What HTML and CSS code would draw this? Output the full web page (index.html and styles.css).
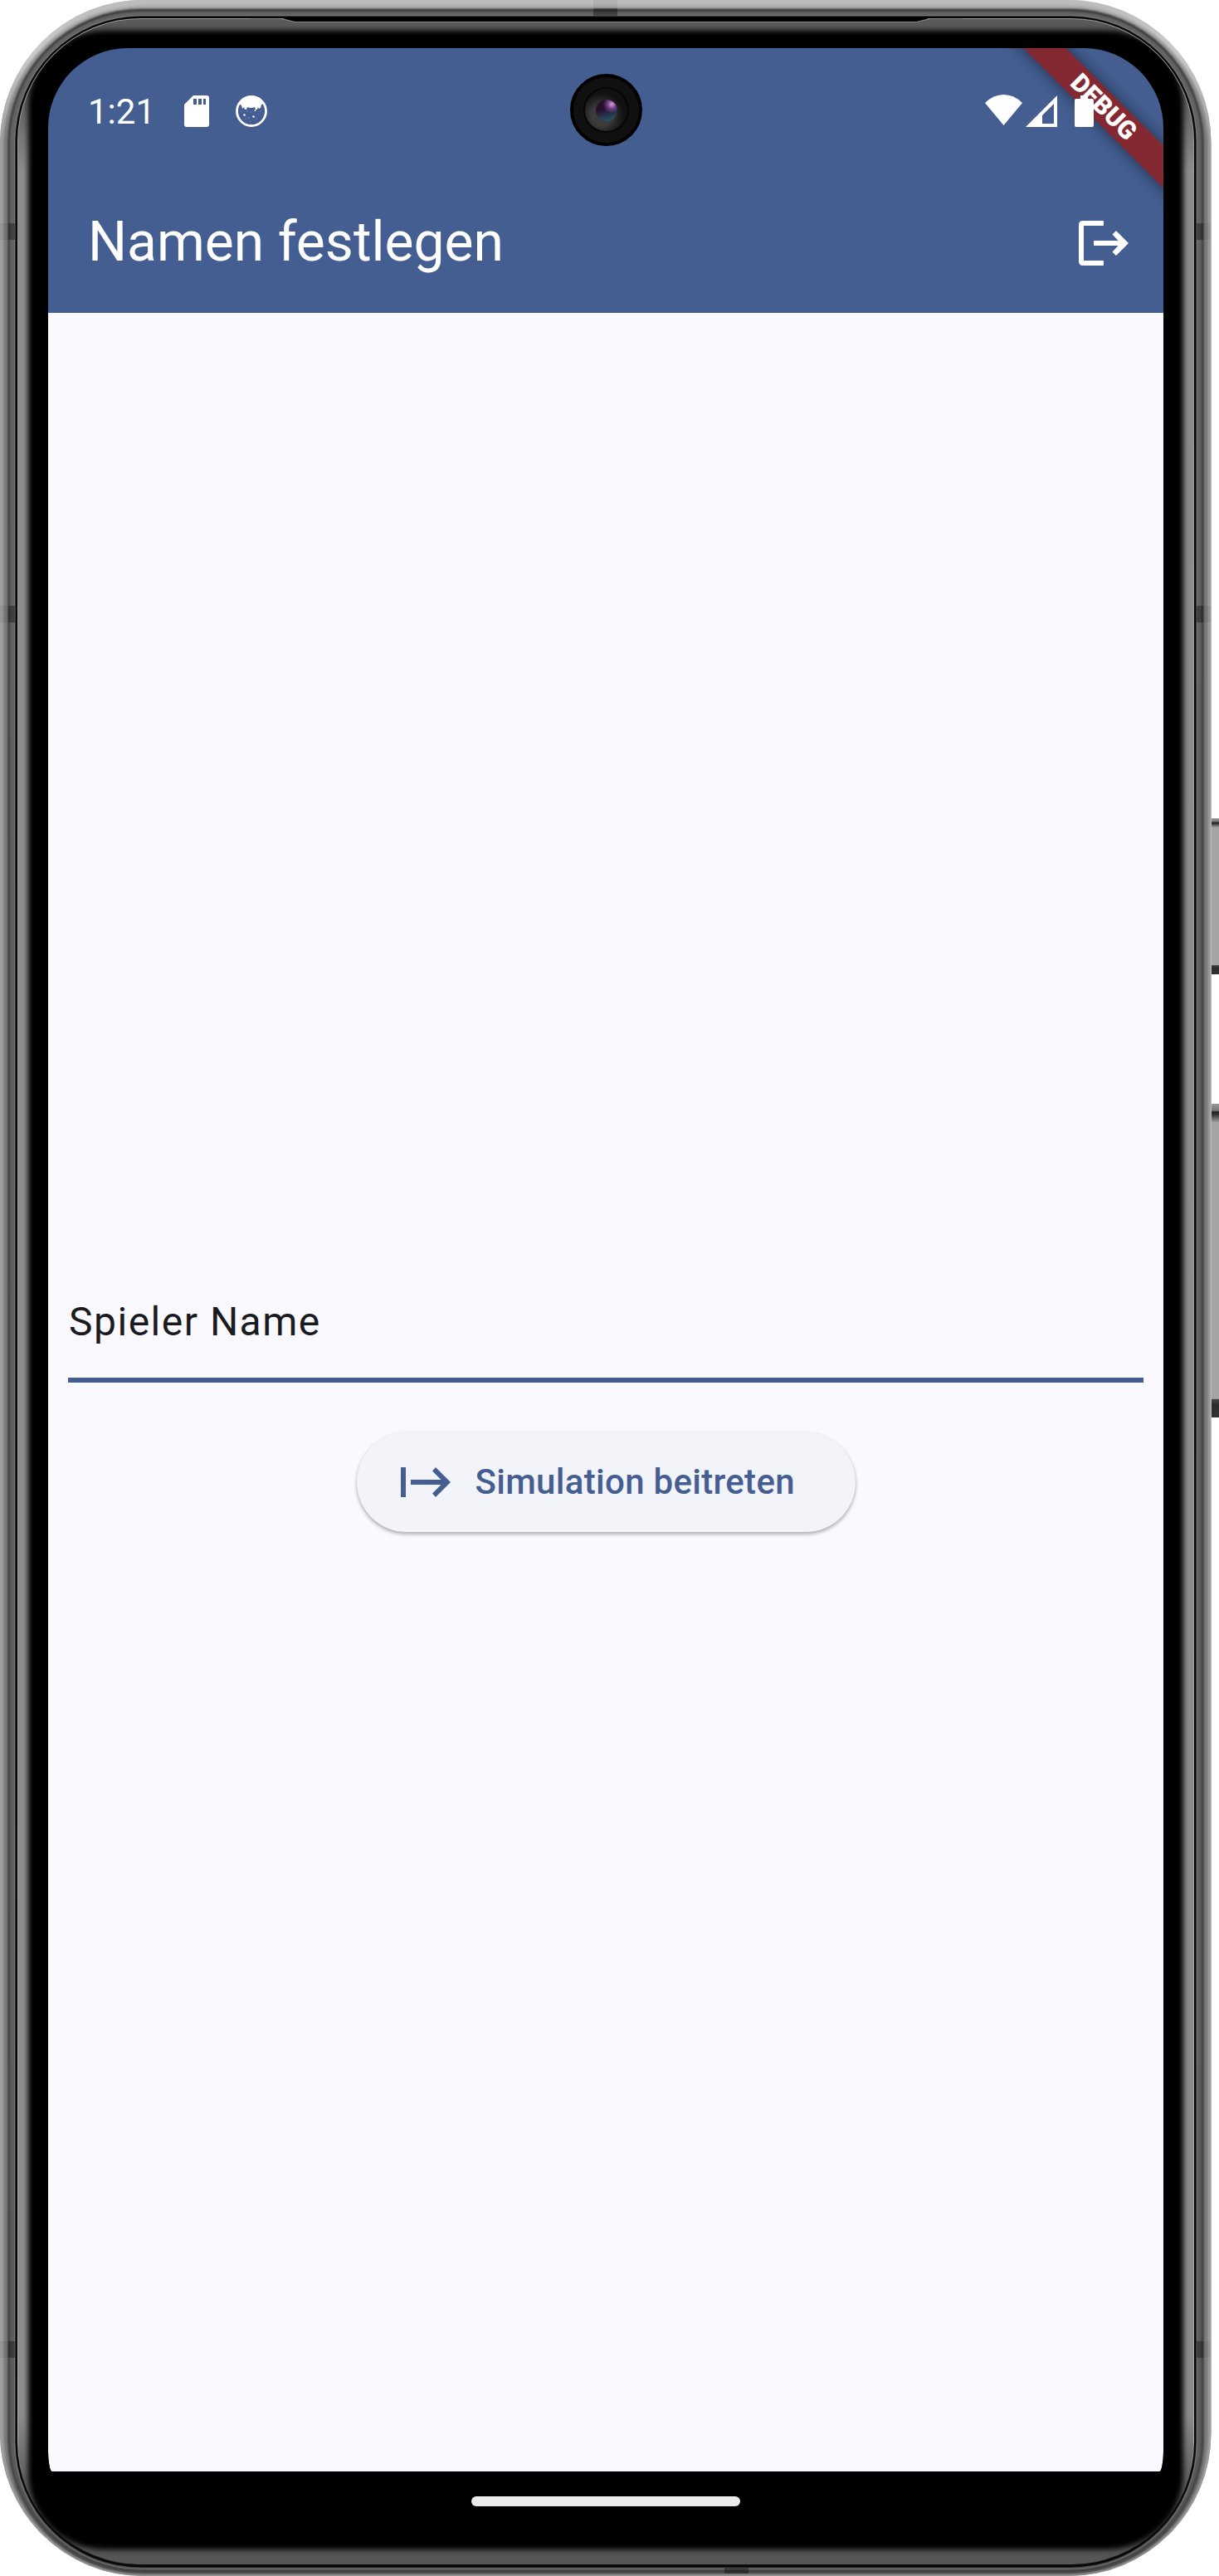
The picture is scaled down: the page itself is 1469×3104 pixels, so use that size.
FILE: index.html
```html
<!DOCTYPE html>
<html lang="de">
<head>
<meta charset="utf-8">
<title>Namen festlegen</title>
<link rel="stylesheet" href="styles.css">
</head>
<body>
<div class="device">
  <svg class="frame" viewBox="0 0 1469 3104" width="1469" height="3104" aria-hidden="true">
    <defs>
      <linearGradient id="edge" gradientUnits="userSpaceOnUse" x1="0" y1="0" x2="0" y2="3104">
        <stop offset="0" stop-color="#bcbcbc"/><stop offset=".02" stop-color="#cacaca"/><stop offset=".055" stop-color="#a0a0a0"/><stop offset=".95" stop-color="#a0a0a0"/><stop offset="1" stop-color="#959595"/>
      </linearGradient>
      <linearGradient id="edge2" gradientUnits="userSpaceOnUse" x1="0" y1="0" x2="0" y2="3104">
        <stop offset="0" stop-color="#b0b0b0"/><stop offset=".02" stop-color="#9c9c9c"/><stop offset=".055" stop-color="#7c7c7c"/><stop offset=".95" stop-color="#7c7c7c"/><stop offset="1" stop-color="#555"/>
      </linearGradient>
      <linearGradient id="rail" gradientUnits="userSpaceOnUse" x1="0" y1="0" x2="0" y2="3104">
        <stop offset="0" stop-color="#646464"/><stop offset=".95" stop-color="#5c5c5c"/><stop offset="1" stop-color="#484848"/>
      </linearGradient>
      <linearGradient id="bevel" gradientUnits="userSpaceOnUse" x1="0" y1="22" x2="0" y2="3092">
        <stop offset="0" stop-color="#5c5c5c"/><stop offset=".015" stop-color="#444"/><stop offset=".06" stop-color="#8c8c8c"/><stop offset=".94" stop-color="#8c8c8c"/><stop offset=".98" stop-color="#484848"/><stop offset="1" stop-color="#585858"/>
      </linearGradient>
      <linearGradient id="highlight" gradientUnits="userSpaceOnUse" x1="0" y1="22" x2="0" y2="3092">
        <stop offset="0" stop-color="#999"/><stop offset=".95" stop-color="#aaa"/><stop offset=".98" stop-color="#222"/><stop offset="1" stop-color="#111"/>
      </linearGradient>
      <linearGradient id="key" x1="0" y1="0" x2="0" y2="1">
        <stop offset="0" stop-color="#999"/><stop offset=".022" stop-color="#777"/><stop offset=".026" stop-color="#222"/><stop offset=".034" stop-color="#333"/><stop offset=".06" stop-color="#a4a4a4"/><stop offset=".94" stop-color="#a4a4a4"/><stop offset=".943" stop-color="#444"/><stop offset=".96" stop-color="#2c2c2c"/><stop offset="1" stop-color="#333"/>
      </linearGradient>
      <filter id="soft" filterUnits="userSpaceOnUse" x="0" y="0" width="1469" height="3104"><feGaussianBlur stdDeviation="3"/></filter>
      <filter id="metal" filterUnits="userSpaceOnUse" x="0" y="0" width="1469" height="3104"><feGaussianBlur stdDeviation="1.1"/></filter>
      <clipPath id="glass"><rect x="22" y="23" width="1416" height="3067" rx="147"/></clipPath>
      <clipPath id="body"><rect width="1459.500" height="3104" rx="172"/></clipPath>
    </defs>
    <rect class="body-edge" width="1459.500" height="3104" rx="172"/>
    <g clip-path="url(#body)"><g filter="url(#metal)">
      <rect x="-8" y="-8" width="1476" height="3120" rx="178" fill="url(#edge)"/>
      <rect x="4" y="6" width="1452" height="3096" rx="168" fill="url(#edge2)"/>
      <rect x="9" y="10" width="1442" height="3090" rx="162" fill="#3a3a3a"/>
      <rect x="12" y="14" width="1436" height="3084" rx="158" fill="url(#rail)"/>
    </g></g>
    <rect class="hairline" x="17.500" y="18.500" width="1425" height="3077" rx="152"/>
    <rect x="18.500" y="19.500" width="1423" height="3074" rx="151" fill="#080808"/>
    <rect x="21" y="22" width="1418" height="3069" rx="148" fill="url(#highlight)"/>
    <rect x="22" y="23" width="1416" height="3067" rx="147" fill="url(#bevel)"/>
    <g clip-path="url(#glass)"><rect x="34" y="37" width="1392" height="3035" rx="92" filter="url(#soft)"/></g>
    <path d="M337 21h786l-18 5H355z" fill="#000"/>
    <path d="M300 22.500h38l17 4h750l17-4h38" fill="none" stroke="#858585"/>
    <g fill="#000">
      <path fill-opacity=".06" d="M0 269h10v20H0zM1450 269h9v20h-9zM0 730h10v20H0zM1450 730h9v20h-9zM0 2821h10v20H0zM1450 2821h9v20h-9zM715 0h29v10h-29z"/>
      <path fill-opacity=".35" d="M10 269h8v20h-8zM1442 269h8v20h-8zM10 730h8v20h-8zM1442 730h8v20h-8zM10 2821h8v20h-8zM1442 2821h8v20h-8zM715 10h29v9h-29zM873 3094h29v7h-29z"/>
    </g>
    <path fill="url(#key)" d="M1460 986h9v188h-9z"/>
    <path fill="url(#key)" d="M1460 1330h9v378h-9z"/>
  </svg>

  <div class="screen">
    <header class="top">
      <div class="status">
        <div class="status-left">
          <span class="clock">1:21</span>
          <svg class="sd" viewBox="0 0 30 38" width="30" height="38"><path fill="#fff" fill-rule="evenodd" d="M11 0h16q3 0 3 3v32q0 3-3 3H3q-3 0-3-3V11zM11 4v7h4V4zM17 4v7h4V4zM23 4v7h3V4z"/></svg>
          <svg class="face" viewBox="0 0 38 38" width="38" height="38"><circle cx="19" cy="19" r="17.500" fill="none" stroke="#fff" stroke-width="2.800"/><path fill="#fff" d="M4 10Q9 1 19 1t15 9l-3 1-1 4-2 1-1-2-1 3-2 0-1-3q-5 2-9 0l-1 3-2 0-1-3-2 2-1-4z"/><g fill="#fff"><circle cx="10.500" cy="23.500" r="1.200"/><circle cx="23.500" cy="18" r="1"/><circle cx="21.500" cy="25.500" r="1.200"/></g><g fill="#fff" fill-opacity=".45"><circle cx="14" cy="19" r=".7"/><circle cx="18" cy="20" r=".6"/><circle cx="27" cy="22" r=".6"/><circle cx="7.500" cy="19" r=".6"/><circle cx="16" cy="27" r=".7"/><circle cx="12" cy="28" r=".6"/><circle cx="25" cy="28" r=".6"/><circle cx="30" cy="19" r=".6"/><circle cx="17.500" cy="31" r=".6"/></g></svg>
        </div>
        <div class="status-right">
          <svg class="wifi" viewBox="0 0 45 37" width="45" height="37"><path fill="#fff" d="M0 10Q10 0 22.500 0T45 10L22.500 37z"/></svg>
          <svg class="cell" viewBox="0 0 38 38" width="38" height="38"><path fill="#fff" fill-rule="evenodd" d="M38 0v38H0zM34 10L20 24v10h14z"/></svg>
          <svg class="battery" viewBox="0 0 23 38" width="23" height="38"><path fill="#fff" d="M7 0h9v4h5q2 0 2 2v30q0 2-2 2H2q-2 0-2-2V6q0-2 2-2h5z"/></svg>
        </div>
      </div>
      <div class="appbar">
        <h1>Namen festlegen</h1>
        <svg class="logout" viewBox="0 0 60 54" width="60" height="54"><path fill="#fff" d="M30 0v6H6v42h24v6H5q-5 0-5-5V5q0-5 5-5zM18 24h29.500l-7-7.500L45 12l15 15-15 15-4.500-4.500 7-7.500H18z"/></svg>
      </div>
    </header>
    <main>
      <label class="field">Spieler Name</label>
      <button class="join">
        <svg viewBox="0 0 60 36" width="60" height="36"><path fill="#445e91" d="M0 0h6v36H0zM12 15h36.500L38 4.500 42 0l18 18-18 18-4-4.500L48.500 21H12z"/></svg>
        <span>Simulation beitreten</span>
      </button>
    </main>
    <footer class="nav"><div class="pill"></div></footer>
    <div class="ribbon">DEBUG</div>
    <div class="camera"><div class="ring"><div class="lens"></div></div></div>
  </div>
</div>
</body>
</html>
```
FILE: styles.css
```css
* { box-sizing: border-box; }
body { margin: 0; background: #fff; font-family: Roboto, sans-serif; }
svg { display: block; flex: none; }
.device { position: relative; width: 1469px; height: 3104px; padding: 58px 67px 54px 58px; overflow: hidden; }
.frame { position: absolute; left: 0; top: 0; }
.body-edge { fill: url(#edge); }
.hairline { fill: none; stroke: #777; stroke-width: 1; }
.screen { position: relative; width: 1344px; height: 2992px; border-radius: 96px; overflow: hidden; background: #000; display: flex; flex-direction: column; }
.top { background: #445e91; color: #fff; height: 319px; display: flex; flex-direction: column; }
.status { height: 151px; display: flex; justify-content: space-between; padding: 57px 84px 0 48px; }
.status-left, .status-right { display: flex; align-items: flex-start; }
.clock { font-size: 42px; line-height: 40px; width: 116px; }
.face { margin-left: 32px; }
.wifi { margin-top: -1px; }
.cell { margin-left: 4px; }
.battery { position: relative; z-index: 1; margin-left: 21px; }
.appbar { flex: 1; display: flex; align-items: center; justify-content: space-between; padding: 0 42px 0 48px; }
h1 { margin: -2px 0 0; font-size: 66px; font-weight: 400; line-height: 84px; }
main { flex: 1; background: #faf9ff; display: flex; flex-direction: column; align-items: center; justify-content: center; padding: 12px 24px 0; border-radius: 0 0 5px 5px / 0 0 22px 22px; }
.field { width: 100%; height: 144px; border-bottom: 6px solid #445e91; padding-left: 1px; color: #1a1b20; font-size: 48px; line-height: 142px; letter-spacing: 1.5px; }
.join { display: flex; align-items: center; gap: 30px; width: 601px; height: 120px; margin-top: 60px; padding: 0 0 0 53px; border: 0; border-radius: 60px; background: #f3f3fa; color: #445e91; font: 500 42px/60px Roboto, sans-serif; letter-spacing: .3px; box-shadow: 0 3px 4px rgba(0,0,0,.24), 0 1px 4px rgba(0,0,0,.1); }
.join span { padding-top: 1px; }
.nav { height: 72px; background: #000; display: flex; align-items: center; justify-content: center; }
.pill { width: 324px; height: 12px; border-radius: 6px; background: #ebebeb; }
.ribbon { position: absolute; left: 1102px; top: 53px; width: 340px; height: 36px; transform: rotate(45deg); background: #842932; color: #fff; font-size: 30.6px; font-weight: 900; line-height: 36px; text-align: center; box-shadow: 0 0 18px rgba(0,0,0,.5); }
.camera { position: absolute; left: 629px; top: 31px; width: 87px; height: 87px; border-radius: 50%; background: #101010; border: 4px solid #000; display: grid; place-items: center; }
.ring { width: 55px; height: 55px; border-radius: 50%; border: 2px solid #050505; background: radial-gradient(circle at 38% 64%, #3c3c3c 25%, #111 60%); display: grid; place-items: center; }
.lens { width: 26px; height: 26px; border-radius: 50%; background: radial-gradient(circle at 74% 22%, #d59be0 0, #75438a 18%, transparent 38%), linear-gradient(165deg, #251029 40%, #28596c 95%); }
```
